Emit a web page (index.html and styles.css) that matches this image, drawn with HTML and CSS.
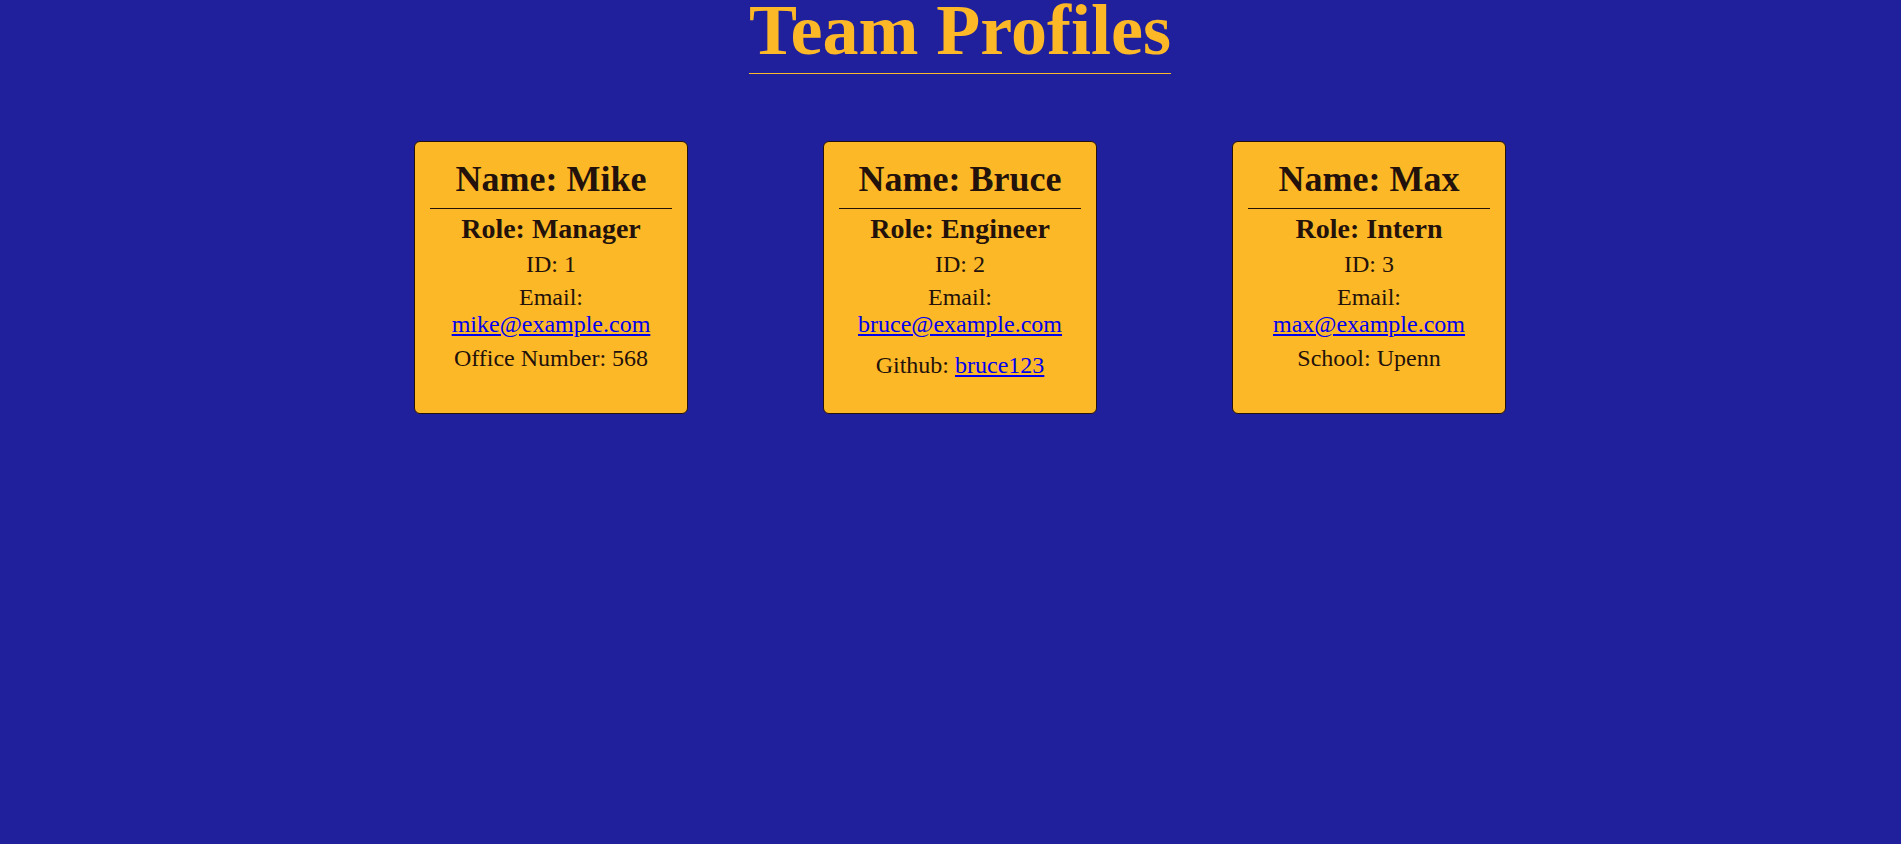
FILE: index.html
```html
<!DOCTYPE html>
<html lang="en">
<head>
<meta charset="UTF-8">
<title>Team Profiles</title>
<link rel="stylesheet" href="styles.css">
</head>
<body>
<div class="page">
  <header class="header">
    <h1 class="title">Team Profiles</h1>
  </header>
  <main class="cards">
    <div class="card">
      <h2 class="card-name">Name: Mike</h2>
      <h3 class="card-role">Role: Manager</h3>
      <p class="card-line">ID: 1</p>
      <p class="card-line">Email: <a href="#">mike@example.com</a></p>
      <p class="card-line">Office Number: 568</p>
    </div>
    <div class="card">
      <h2 class="card-name">Name: Bruce</h2>
      <h3 class="card-role">Role: Engineer</h3>
      <p class="card-line">ID: 2</p>
      <p class="card-line">Email: <a href="#">bruce@example.com</a></p>
      <p class="card-line card-line-gh">Github: <a href="#">bruce123</a></p>
    </div>
    <div class="card">
      <h2 class="card-name">Name: Max</h2>
      <h3 class="card-role">Role: Intern</h3>
      <p class="card-line">ID: 3</p>
      <p class="card-line">Email: <a href="#">max@example.com</a></p>
      <p class="card-line">School: Upenn</p>
    </div>
  </main>
</div>
</body>
</html>
```

FILE: styles.css
```css
html, body {
  margin: 0;
  padding: 0;
}

body {
  background: #21209C;
  font-family: "Liberation Serif", "Times New Roman", serif;
  color: #23120B;
}

.page {
  display: flex;
  flex-direction: column;
  align-items: center;
  padding-left: 19px;
}

.header {
  display: flex;
  justify-content: center;
}

.title {
  margin: 0;
  font-size: 72px;
  font-weight: bold;
  line-height: 60px;
  color: #FDB827;
  padding-bottom: 13px;
  border-bottom: 1px solid #FDB827;
}

.cards {
  display: flex;
  gap: 135px;
  margin-top: 67px;
}

.card {
  box-sizing: border-box;
  width: 274px;
  height: 273px;
  background: #FDB827;
  border: 1px solid #23120B;
  border-radius: 6px;
  padding: 16px 15px;
  text-align: center;
}

.card-name {
  margin: 0;
  font-size: 36px;
  font-weight: bold;
  padding-bottom: 8px;
  border-bottom: 1px solid #23120B;
}

.card-role {
  margin: 4px 0 6px;
  font-size: 28px;
  font-weight: bold;
}

.card-line {
  margin: 6px 0;
  font-size: 24px;
}

.card-line:last-child {
  margin-top: 7px;
}

.card-line-gh,
.card-line-gh:last-child {
  margin-top: 14px;
}

.card-line a {
  color: #0000EE;
}
```
